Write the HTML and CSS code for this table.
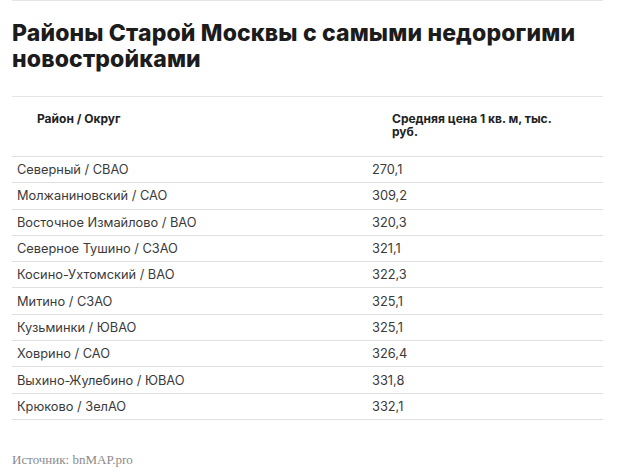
FILE: index.html
```html
<!DOCTYPE html>
<html lang="ru">
<head>
<meta charset="utf-8">
<link rel="stylesheet" href="styles.css">
</head>
<body>
<div class="card">
  <h1 class="title">Районы Старой Москвы с самыми недорогими новостройками</h1>
  <table class="data">
    <thead>
      <tr><th class="c1">Район / Округ</th><th class="c2">Средняя цена 1 кв. м, тыс. руб.</th></tr>
    </thead>
    <tbody>
      <tr><td>Северный / СВАО</td><td>270,1</td></tr>
      <tr><td>Молжаниновский / САО</td><td>309,2</td></tr>
      <tr><td>Восточное Измайлово / ВАО</td><td>320,3</td></tr>
      <tr><td>Северное Тушино / СЗАО</td><td>321,1</td></tr>
      <tr><td>Косино-Ухтомский / ВАО</td><td>322,3</td></tr>
      <tr><td>Митино / СЗАО</td><td>325,1</td></tr>
      <tr><td>Кузьминки / ЮВАО</td><td>325,1</td></tr>
      <tr><td>Ховрино / САО</td><td>326,4</td></tr>
      <tr><td>Выхино-Жулебино / ЮВАО</td><td>331,8</td></tr>
      <tr><td>Крюково / ЗелАО</td><td>332,1</td></tr>
    </tbody>
  </table>
  <p class="source">Источник: bnMAP.pro</p>
</div>
</body>
</html>
```
FILE: styles.css
```css
html, body { margin: 0; padding: 0; background: #fff; }
body { font-family: Inter, "Noto Sans", sans-serif; }
.card {
  margin: 0 22px 0 12px;
  border-top: 1px solid #e6e6e6;
}
.title {
  margin: 0;
  padding: 19px 0 24px;
  font-size: 23px;
  line-height: 26px;
  font-weight: 800;
  color: #1c1c1c;
  letter-spacing: 0.15px;
  border-bottom: 1px solid #e6e6e6;
}
.data {
  width: 100%;
  border-collapse: collapse;
  font-size: 12.8px;
  color: #3a3a3a;
}
.data th {
  text-align: left;
  vertical-align: top;
  font-weight: 700;
  font-size: 12px;
  line-height: 12.5px;
  color: #222;
  padding: 16px 20px 18px 25px;
  border-bottom: 1px solid #e0e0e0;
}
.data th.c1 { width: 310px; }
.data th.c2 { padding-right: 45px; }
.data td {
  padding: 0 5px;
  height: 25.3px;
  border-bottom: 1px solid #e0e0e0;
  vertical-align: middle;
}
.source {
  margin: 32px 0 0;
  font-family: "Liberation Serif", serif;
  font-size: 13px;
  color: #8a8a8a;
}
```
